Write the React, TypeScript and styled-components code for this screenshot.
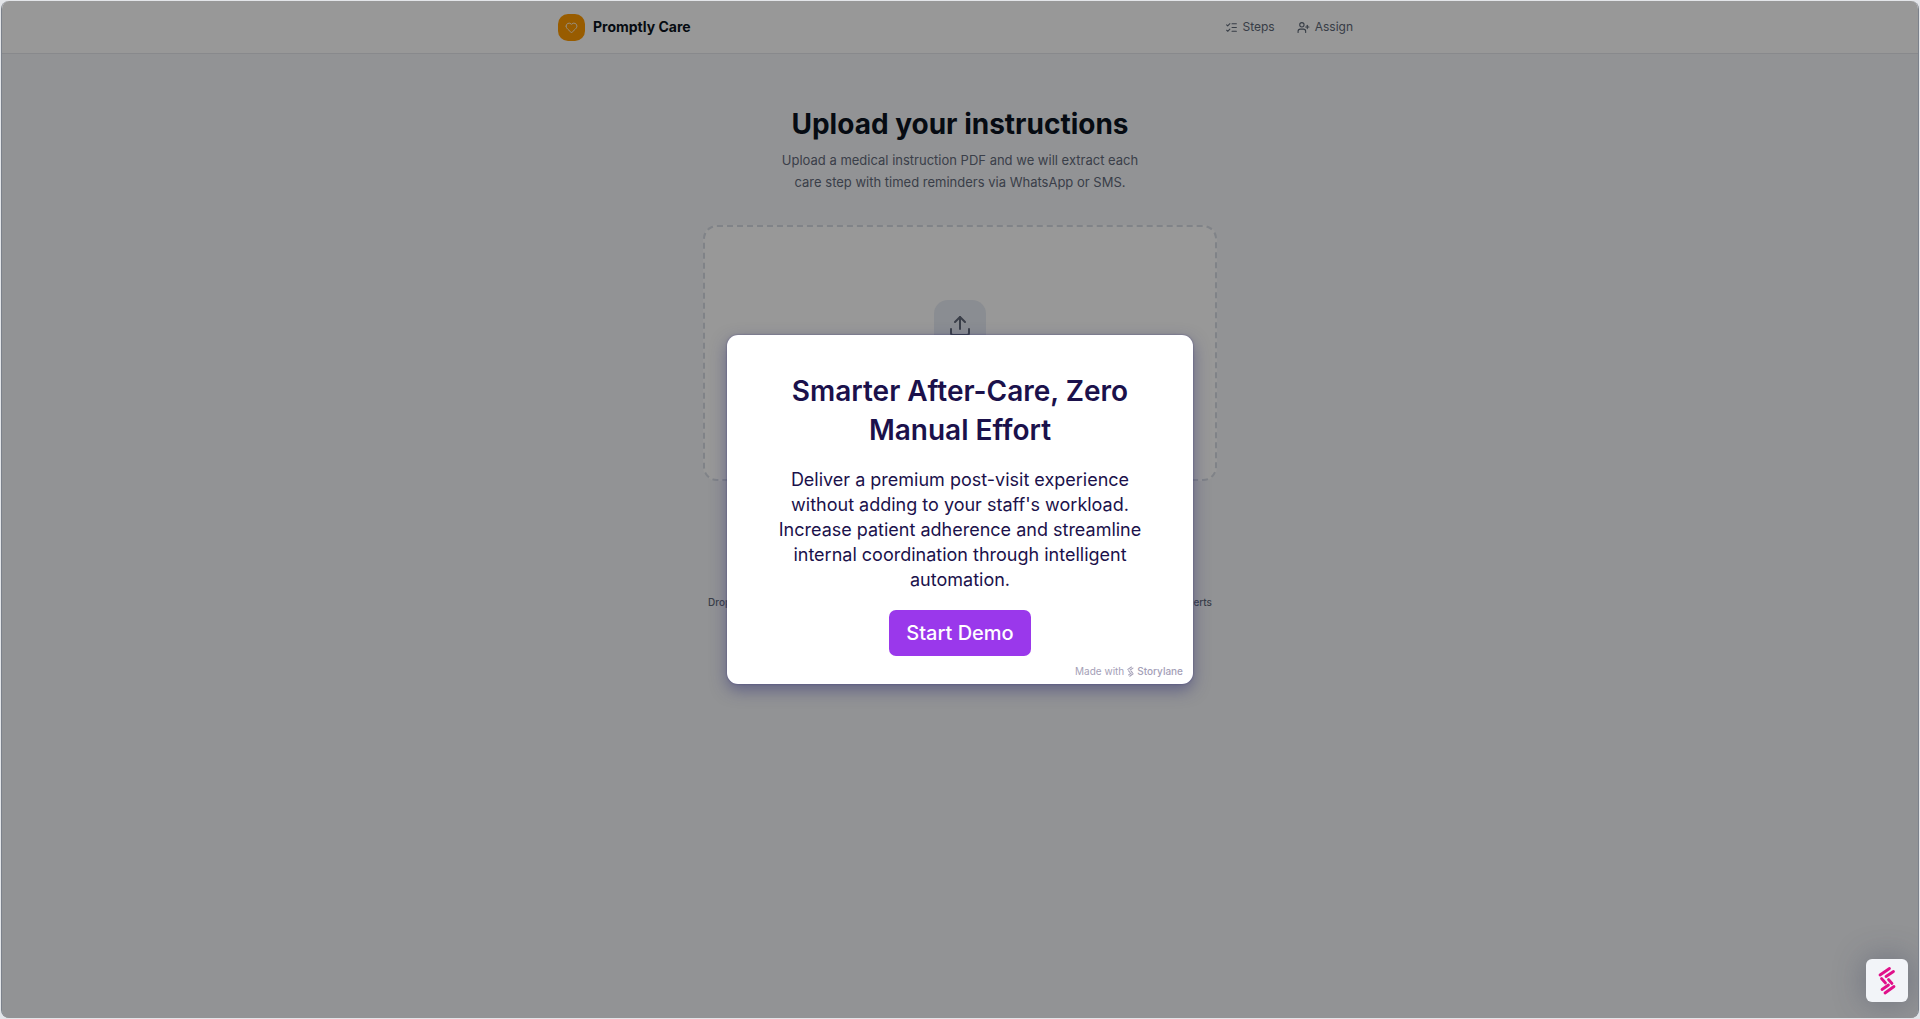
import React from "react";
import styled, { createGlobalStyle } from "styled-components";
import { Heart, ListChecks, UserPlus, Upload } from "lucide-react";

const GlobalStyle = createGlobalStyle`
  *, *::before, *::after { box-sizing: border-box; }
  body { margin: 0; background: #e3e5e9; font-family: Inter, "Liberation Sans", sans-serif; }
  h1, h2, p { margin: 0; }
  #root { display: flow-root; }
`;

const Frame = styled.div`
  position: relative;
  min-height: calc(100vh - 2px);
  margin: 1px;
  overflow: hidden;
  border: solid #7b818b;
  border-width: 0 1px;
  border-radius: 8px;
  background: #f4f6f8;
`;

const Header = styled.header`
  height: 53px;
  border-bottom: 1px solid #e3e5e9;
  background: #fdfdfd;
`;

const HeaderInner = styled.div`
  display: flex;
  align-items: center;
  justify-content: space-between;
  max-width: 804px;
  height: 52px;
  margin: 0 auto;
`;

const Brand = styled.a`
  display: flex;
  align-items: center;
  gap: 8px;
  color: #0b1320;
  font-size: 14px;
  font-weight: 700;
  line-height: 20px;
  text-decoration: none;
`;

const BrandMark = styled.span`
  display: grid;
  place-items: center;
  width: 27px;
  height: 27px;
  border-radius: 10px;
  background: #fd9a00;
  color: #fff;
`;

const Nav = styled.nav`
  display: flex;
  gap: 22px;
  padding-right: 9px;
`;

const NavLink = styled.a`
  display: flex;
  align-items: center;
  gap: 5px;
  color: #5c6675;
  font-size: 12px;
  line-height: 16px;
  text-decoration: none;
`;

const Main = styled.main`
  max-width: 514px;
  margin: 0 auto;
  padding-top: 52px;
  text-align: center;
`;

const Title = styled.h1`
  color: #0b1320;
  font-size: 28px;
  font-weight: 700;
  line-height: 36px;
`;

const Lead = styled.p`
  max-width: 380px;
  margin: 7px auto 0;
  color: #62697a;
  font-size: 13px;
  line-height: 22px;
`;

const DropZone = styled.button`
  display: flex;
  justify-content: center;
  width: 100%;
  height: 256px;
  margin-top: 32px;
  padding: 73px 0 0;
  border: 2px dashed #d5dae3;
  border-radius: 14px;
  background: #fdfdfd;
`;

const UploadTile = styled.span`
  display: grid;
  place-items: center;
  width: 52px;
  height: 52px;
  border-radius: 14px;
  background: #e6ebf3;
  color: #62697a;
`;

const Hints = styled.div`
  display: flex;
  justify-content: space-between;
  margin-top: 113px;
  padding: 0 5px;
  color: #62697a;
  font-size: 10px;
  font-weight: 500;
  line-height: 16px;
`;

const Overlay = styled.div`
  position: absolute;
  inset: 0;
  display: grid;
  place-items: center;
  background: rgba(0, 0, 0, 0.4);
`;

const Modal = styled.section`
  width: 466px;
  max-width: 100%;
  padding: 37px 10px 6px;
  border-radius: 11px;
  background: #fff;
  box-shadow: 0 6px 16px rgba(47, 47, 115, 0.5), 0 0 2px rgba(47, 40, 115, 0.6);
  color: #1b114b;
  text-align: center;
`;

const ModalTitle = styled.h2`
  font-size: 28px;
  font-weight: 600;
  line-height: 39px;
`;

const ModalText = styled.p`
  margin-top: 17px;
  font-size: 18px;
  line-height: 25px;
`;

const StartButton = styled.button`
  height: 46px;
  margin-top: 18px;
  padding: 0 17px;
  border: 0;
  border-radius: 7px;
  background: #9a38eb;
  color: #fff;
  font-family: inherit;
  font-size: 20px;
  font-weight: 500;
`;

const Credit = styled.a`
  display: flex;
  align-items: center;
  justify-content: flex-end;
  gap: 3px;
  margin-top: 8px;
  color: #a4a0b7;
  font-size: 10px;
  line-height: 14px;
  text-decoration: none;
`;

const CreditName = styled.span`
  font-weight: 500;
`;

const LauncherButton = styled.button`
  position: absolute;
  right: 10px;
  bottom: 16px;
  display: grid;
  place-items: center;
  width: 42px;
  height: 43px;
  padding: 0;
  border: 0;
  border-radius: 6px;
  background: #f2f4f8;
  box-shadow: 0 0 32px rgba(50, 60, 90, 0.4);
  color: #e0118a;
`;

function StorylaneMark({ width, height }: { width: number; height: number }) {
  return (
    <svg width={width} height={height} viewBox="0 0 18 29" fill="none" stroke="currentColor" strokeWidth="2.8" strokeLinecap="round" aria-hidden="true">
      <path d="M2 9 11.5 2.5M8 10.5 15.5 5.5M3.5 12.5 7.5 17M10.5 13.5 14 17.5M4 23.5 10.5 19M7 27 16 20.5" />
    </svg>
  );
}

export default function App() {
  return (
    <>
      <GlobalStyle />
      <Frame>
        <Header>
          <HeaderInner>
            <Brand href="#home">
              <BrandMark><Heart size={13} strokeWidth={1.5} /></BrandMark>
              Promptly Care
            </Brand>
            <Nav>
              <NavLink href="#steps"><ListChecks size={13} />Steps</NavLink>
              <NavLink href="#assign"><UserPlus size={13} />Assign</NavLink>
            </Nav>
          </HeaderInner>
        </Header>
        <Main>
          <Title>Upload your instructions</Title>
          <Lead>Upload a medical instruction PDF and we will extract each care step with timed reminders via WhatsApp or SMS.</Lead>
          <DropZone type="button" aria-label="Upload">
            <UploadTile><Upload size={24} /></UploadTile>
          </DropZone>
          <Hints><span>Drop</span><span>Alerts</span></Hints>
        </Main>
        <Overlay>
          <Modal role="dialog" aria-labelledby="modal-title">
            <ModalTitle id="modal-title">Smarter After-Care, Zero<br />Manual Effort</ModalTitle>
            <ModalText>
              Deliver a premium post-visit experience<br />
              without adding to your staff's workload.<br />
              Increase patient adherence and streamline<br />
              internal coordination through intelligent<br />
              automation.
            </ModalText>
            <StartButton type="button">Start Demo</StartButton>
            <Credit href="#storylane">
              Made with
              <StorylaneMark width={7} height={11} />
              <CreditName>Storylane</CreditName>
            </Credit>
          </Modal>
        </Overlay>
        <LauncherButton type="button" aria-label="Storylane">
          <StorylaneMark width={18} height={29} />
        </LauncherButton>
      </Frame>
    </>
  );
}
